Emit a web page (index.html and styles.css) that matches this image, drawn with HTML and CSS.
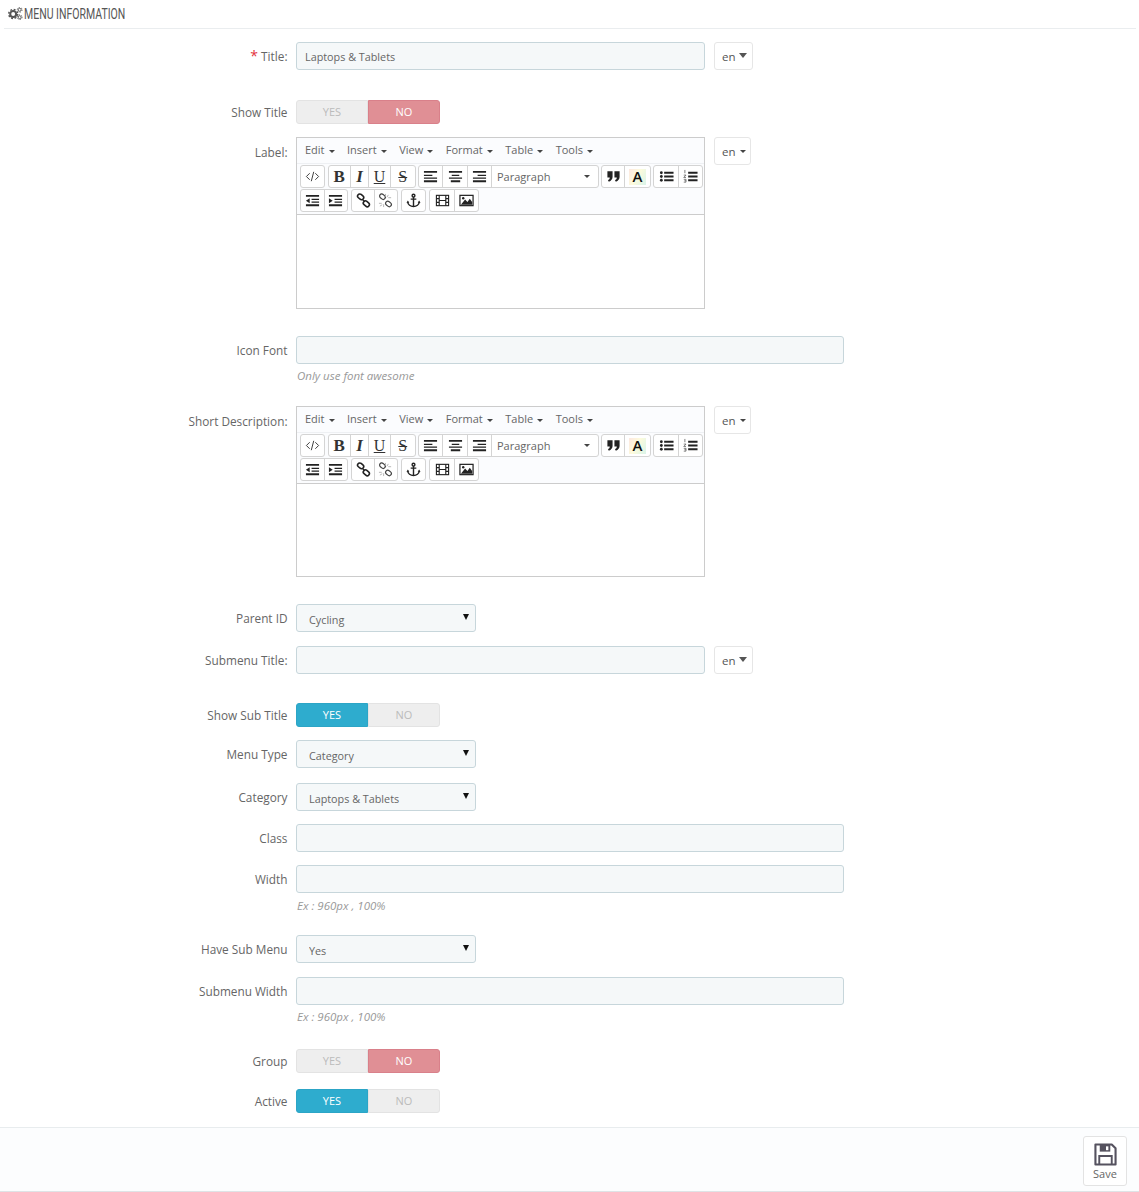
FILE: index.html
```html
<!DOCTYPE html>
<html lang="en">
<head>
<meta charset="utf-8">
<title>Menu Information</title>
<link rel="stylesheet" href="styles.css">
</head>
<body>
<svg class="sprite" xmlns="http://www.w3.org/2000/svg">
<symbol id="i-code" viewBox="0 0 16 16"><path d="M5 4.500 1.500 8 5 11.500M11 4.500 14.500 8 11 11.500M9.300 3 6.700 13" fill="none" stroke="#333" stroke-width="1"/></symbol>
<symbol id="i-left" viewBox="0 0 16 16"><path d="M1 2h14v2H1zM1 6h9v1.500H1zM1 9h14v1.500H1zM1 12h14v2H1z" fill="#222"/></symbol>
<symbol id="i-center" viewBox="0 0 16 16"><path d="M1 2h14v2H1zM4 6h8v1.500H4zM1 9h14v1.500H1zM3 12h10v2H3z" fill="#222"/></symbol>
<symbol id="i-right" viewBox="0 0 16 16"><path d="M1 2h14v2H1zM6 6h9v1.500H6zM1 9h14v1.500H1zM1 12h14v2H1z" fill="#222"/></symbol>
<symbol id="i-quote" viewBox="0 0 16 16"><path d="M1.500 2.500h5.500v6c0 2.500-1.500 4-4 5L2 11.800c1.300-.6 2-1.300 2-2.800H1.500zM9 2.500h5.500v6c0 2.500-1.500 4-4 5l-1-1.700c1.300-.6 2-1.300 2-2.800H9z" fill="#222"/></symbol>
<symbol id="i-ul" viewBox="0 0 16 16"><path d="M5.500 3h10v2h-10zM5.500 7h10v2h-10zM5.500 11h10v2h-10z" fill="#222"/><circle cx="2.500" cy="4" r="1.500" fill="#222"/><circle cx="2.500" cy="8" r="1.500" fill="#222"/><circle cx="2.500" cy="12" r="1.500" fill="#222"/></symbol>
<symbol id="i-ol" viewBox="0 0 16 16"><path d="M5.500 3h10v2h-10zM5.500 7h10v2h-10zM5.500 11h10v2h-10z" fill="#222"/><path d="M2 1v3.500M.8 6.500h2.400L.8 9h2.400M.8 11h2.400v3H.8M1.500 12.500h1.700" fill="none" stroke="#555" stroke-width=".8"/></symbol>
<symbol id="i-outdent" viewBox="0 0 16 16"><path d="M1 2h14v2H1zM7 6h8v1.500H7zM7 9h8v1.500H7zM1 12h14v2H1z" fill="#222"/><path d="M5 5.500v5.500L1 8.200z" fill="#222"/></symbol>
<symbol id="i-indent" viewBox="0 0 16 16"><path d="M1 2h14v2H1zM7 6h8v1.500H7zM7 9h8v1.500H7zM1 12h14v2H1z" fill="#222"/><path d="M1 5.500v5.500l4-2.800z" fill="#222"/></symbol>
<symbol id="i-link" viewBox="0 0 16 16"><g fill="none" stroke="#222" stroke-width="1.700"><rect x="1.500" y="1.800" width="7" height="4.600" rx="2.300" transform="rotate(40 5 4)"/><rect x="7.500" y="9.200" width="7" height="4.600" rx="2.300" transform="rotate(40 11 11.500)"/><path d="M6.500 6.500l3 3" stroke-width="1.400"/></g></symbol>
<symbol id="i-unlink" viewBox="0 0 16 16"><g fill="none" stroke="#444" stroke-width="1.300"><rect x="1.500" y="1.800" width="6.500" height="4.600" rx="2.300" transform="rotate(40 5 4)"/><rect x="8" y="9.200" width="6.500" height="4.600" rx="2.300" transform="rotate(40 11 11.500)"/></g><path d="M8 1v3M11 2 9.500 4.500M14 5h-3M1 11h3M2 14l2.500-1.500M6 15v-3" fill="none" stroke="#aaa" stroke-width=".9"/></symbol>
<symbol id="i-anchor" viewBox="0 0 16 16"><g fill="none" stroke="#222" stroke-width="1.500"><circle cx="8" cy="2.800" r="1.500"/><path d="M8 4.300V14.500M5 6.500h6M1.800 9.500c.3 3 3 5 6.200 5s5.900-2 6.200-5"/></g><path d="M.5 10.500 2 8l1.500 2.500zM12.500 10.500 14 8l1.500 2.500z" fill="#222"/></symbol>
<symbol id="i-film" viewBox="0 0 16 16"><g fill="none" stroke="#222" stroke-width="1.200"><rect x="1.500" y="2.500" width="13" height="11"/><path d="M4.500 2.500v11M11.500 2.500v11M1.500 6h3M1.500 10h3M11.500 6h3M11.500 10h3M4.500 8h7"/></g></symbol>
<symbol id="i-image" viewBox="0 0 16 16"><rect x="1" y="2.500" width="14" height="11" fill="#fff" stroke="#222" stroke-width="1.300"/><path d="M2 12.500 6.500 7l2.500 2.500L11.500 6l2.500 3.500v3z" fill="#222"/><circle cx="4.500" cy="5.500" r="1.300" fill="#222"/></symbol>
<symbol id="i-cogs" viewBox="0 0 16 14"><g fill="none" stroke="#555"><circle cx="5.500" cy="7.500" r="3.200" stroke-width="2.200"/><circle cx="5.500" cy="7.500" r="4.800" stroke-width="1.600" stroke-dasharray="2 1.770"/><circle cx="12.500" cy="3" r="1.600" stroke-width="1"/><circle cx="12.500" cy="3" r="2.600" stroke-width="1" stroke-dasharray="1.300 1.420"/><circle cx="12.500" cy="11" r="1.600" stroke-width="1"/><circle cx="12.500" cy="11" r="2.600" stroke-width="1" stroke-dasharray="1.300 1.420"/></g></symbol>
<symbol id="i-save" viewBox="0 0 24 24"><path d="M1.500 1.500h17l4 4v17h-21z" fill="none" stroke="#55525f" stroke-width="2.200" stroke-linejoin="round"/><path d="M6 2h11v7H6z" fill="#55525f"/><path d="M12.500 3.500h2.500v4h-2.500z" fill="#fff"/><path d="M5.500 22v-8.500h13V22" fill="none" stroke="#55525f" stroke-width="2"/></symbol>
</svg>

<header class="panel-head"><svg class="head-icon"><use href="#i-cogs"/></svg><span class="head-text">MENU INFORMATION</span></header>

<form class="form">
  <div class="row first">
    <label class="lbl"><span class="req">*</span> Title:</label>
    <input class="field field-md" type="text" value="Laptops &amp; Tablets">
    <button class="lang" type="button">en <i class="caret-lg"></i></button>
  </div>

  <div class="row gap-30">
    <label class="lbl">Show Title</label>
    <div class="switch"><span class="off">YES</span><span class="on-no">NO</span></div>
  </div>

  <div class="row top gap-13">
    <label class="lbl lbl-top">Label:</label>
    <div class="editor">
      <div class="menubar"><span>Edit<i class="caret"></i></span><span>Insert<i class="caret"></i></span><span>View<i class="caret"></i></span><span>Format<i class="caret"></i></span><span>Table<i class="caret"></i></span><span>Tools<i class="caret"></i></span></div>
      <div class="tools">
        <div class="tool-row">
          <div class="grp"><span class="b w235"><svg class="ic"><use href="#i-code"/></svg></span></div>
          <div class="grp"><span class="b w215 tx-b">B</span><span class="b w18 tx-i">I</span><span class="b w22 tx-u"><u>U</u></span><span class="b w245 tx-s"><s>S</s></span></div>
          <div class="grp"><span class="b w23"><svg class="ic"><use href="#i-left"/></svg></span><span class="b w25"><svg class="ic"><use href="#i-center"/></svg></span><span class="b w24"><svg class="ic"><use href="#i-right"/></svg></span><span class="b para">Paragraph<i class="caret"></i></span></div>
          <div class="grp"><span class="b w22"><svg class="ic"><use href="#i-quote"/></svg></span><span class="b w257"><span class="tx-a">A</span></span></div>
          <div class="grp"><span class="b w24"><svg class="ic"><use href="#i-ul"/></svg></span><span class="b w237"><svg class="ic"><use href="#i-ol"/></svg></span></div>
        </div>
        <div class="tool-row tool-row-wide">
          <div class="grp"><span class="b w23"><svg class="ic"><use href="#i-outdent"/></svg></span><span class="b w235"><svg class="ic"><use href="#i-indent"/></svg></span></div>
          <div class="grp"><span class="b w22"><svg class="ic"><use href="#i-link"/></svg></span><span class="b w225"><svg class="ic"><use href="#i-unlink"/></svg></span></div>
          <div class="grp"><span class="b w23"><svg class="ic"><use href="#i-anchor"/></svg></span></div>
          <div class="grp"><span class="b w24"><svg class="ic"><use href="#i-film"/></svg></span><span class="b w237"><svg class="ic"><use href="#i-image"/></svg></span></div>
        </div>
      </div>
      <div class="edit-area"></div>
    </div>
    <button class="lang lang-sm" type="button">en<i class="caret"></i></button>
  </div>

  <div class="row gap-27">
    <label class="lbl">Icon Font</label>
    <input class="field field-lg" type="text">
  </div>
  <p class="help">Only use font awesome</p>

  <div class="row top gap-help">
    <label class="lbl lbl-top">Short Description:</label>
    <div class="editor">
      <div class="menubar"><span>Edit<i class="caret"></i></span><span>Insert<i class="caret"></i></span><span>View<i class="caret"></i></span><span>Format<i class="caret"></i></span><span>Table<i class="caret"></i></span><span>Tools<i class="caret"></i></span></div>
      <div class="tools">
        <div class="tool-row">
          <div class="grp"><span class="b w235"><svg class="ic"><use href="#i-code"/></svg></span></div>
          <div class="grp"><span class="b w215 tx-b">B</span><span class="b w18 tx-i">I</span><span class="b w22 tx-u"><u>U</u></span><span class="b w245 tx-s"><s>S</s></span></div>
          <div class="grp"><span class="b w23"><svg class="ic"><use href="#i-left"/></svg></span><span class="b w25"><svg class="ic"><use href="#i-center"/></svg></span><span class="b w24"><svg class="ic"><use href="#i-right"/></svg></span><span class="b para">Paragraph<i class="caret"></i></span></div>
          <div class="grp"><span class="b w22"><svg class="ic"><use href="#i-quote"/></svg></span><span class="b w257"><span class="tx-a">A</span></span></div>
          <div class="grp"><span class="b w24"><svg class="ic"><use href="#i-ul"/></svg></span><span class="b w237"><svg class="ic"><use href="#i-ol"/></svg></span></div>
        </div>
        <div class="tool-row tool-row-wide">
          <div class="grp"><span class="b w23"><svg class="ic"><use href="#i-outdent"/></svg></span><span class="b w235"><svg class="ic"><use href="#i-indent"/></svg></span></div>
          <div class="grp"><span class="b w22"><svg class="ic"><use href="#i-link"/></svg></span><span class="b w225"><svg class="ic"><use href="#i-unlink"/></svg></span></div>
          <div class="grp"><span class="b w23"><svg class="ic"><use href="#i-anchor"/></svg></span></div>
          <div class="grp"><span class="b w24"><svg class="ic"><use href="#i-film"/></svg></span><span class="b w237"><svg class="ic"><use href="#i-image"/></svg></span></div>
        </div>
      </div>
      <div class="edit-area edit-area-short"></div>
    </div>
    <button class="lang lang-sm" type="button">en<i class="caret"></i></button>
  </div>

  <div class="row gap-27">
    <label class="lbl">Parent ID</label>
    <div class="sel"><select><option>Cycling</option></select></div>
  </div>

  <div class="row gap-14">
    <label class="lbl">Submenu Title:</label>
    <input class="field field-md" type="text">
    <button class="lang" type="button">en <i class="caret-lg"></i></button>
  </div>

  <div class="row gap-29">
    <label class="lbl">Show Sub Title</label>
    <div class="switch"><span class="on-yes">YES</span><span class="off">NO</span></div>
  </div>

  <div class="row gap-13">
    <label class="lbl">Menu Type</label>
    <div class="sel"><select><option>Category</option></select></div>
  </div>

  <div class="row gap-15">
    <label class="lbl">Category</label>
    <div class="sel"><select><option>Laptops &amp; Tablets</option></select></div>
  </div>

  <div class="row gap-13">
    <label class="lbl">Class</label>
    <input class="field field-lg" type="text">
  </div>

  <div class="row gap-13">
    <label class="lbl">Width</label>
    <input class="field field-lg" type="text">
  </div>
  <p class="help help-low">Ex : 960px , 100%</p>

  <div class="row gap-help-low">
    <label class="lbl">Have Sub Menu</label>
    <div class="sel"><select><option>Yes</option></select></div>
  </div>

  <div class="row gap-14">
    <label class="lbl">Submenu Width</label>
    <input class="field field-lg" type="text">
  </div>
  <p class="help">Ex : 960px , 100%</p>

  <div class="row gap-help-lg">
    <label class="lbl">Group</label>
    <div class="switch"><span class="off">YES</span><span class="on-no">NO</span></div>
  </div>

  <div class="row gap-16">
    <label class="lbl">Active</label>
    <div class="switch"><span class="on-yes">YES</span><span class="off">NO</span></div>
  </div>
</form>

<footer class="panel-foot">
  <button class="save" type="button"><svg class="save-icon"><use href="#i-save"/></svg><span>Save</span></button>
</footer>
</body>
</html>
```

FILE: styles.css
```css
* { box-sizing: border-box; }
html, body { margin: 0; padding: 0; background: #fff; }
body { font-family: "Open Sans", sans-serif; font-size: 12px; color: #666; height: 1192px; overflow: hidden; }
.sprite { display: none; }

.panel-head { height: 29px; margin: 0 3px 0 4px; padding: 6px 0 0 4px; border-bottom: 1px solid #eaedef; display: flex; align-items: flex-start; color: #555; }
.head-icon { width: 15px; height: 13px; margin: 1px 1px 0 0; flex: none; }
.head-text { font-family: "Roboto", sans-serif; font-size: 14.500px; line-height: 17px; transform: scaleX(.725); transform-origin: left center; white-space: nowrap; }

.form { display: block; }
.row { display: flex; align-items: center; margin: 0; }
.row.top { align-items: flex-start; }
.first { margin-top: 13px; }
.gap-13 { margin-top: 13px; }
.gap-14 { margin-top: 14px; }
.gap-15 { margin-top: 15px; }
.gap-16 { margin-top: 16px; }
.gap-27 { margin-top: 27px; }
.gap-29 { margin-top: 29px; }
.gap-30 { margin-top: 30px; }
.gap-help { margin-top: 22px; }
.gap-help-low { margin-top: 21px; }
.gap-help-lg { margin-top: 24px; }

.lbl { width: 287.500px; margin-right: 8.500px; margin-top: 0; padding-bottom: 1px; text-align: right; font-size: 11.800px; line-height: 18px; color: #666; flex: none; }
.lbl-top { margin-top: 6px; }
.req { color: #e3323c; font-size: 14px; }

.field { height: 28px; border: 1px solid #c7d6db; border-radius: 3px; background: #f5f8f9; padding: 0 8px; font: 10.800px "Open Sans", sans-serif; color: #666; }
.field-md { width: 409px; }
.field-lg { width: 548px; }

.lang { margin-left: 9px; height: 28px; width: 39px; padding: 0 0 0 7px; border: 1px solid #e6e6e6; border-radius: 3px; background: #fff; font: 11.500px "Open Sans", sans-serif; color: #555; display: flex; align-items: center; }
.lang-sm { width: 37px; margin-top: 0; }
.caret-lg { width: 0; height: 0; margin: 0 0 1px 3px; border-left: 4.500px solid transparent; border-right: 4.500px solid transparent; border-top: 5px solid #555; }
.caret { display: inline-block; width: 0; height: 0; margin-left: 4px; border-left: 3px solid transparent; border-right: 3px solid transparent; border-top: 3.500px solid #444; vertical-align: middle; }

.switch { display: flex; width: 144px; height: 24px; font-size: 11px; line-height: 22px; text-align: center; }
.switch span { width: 72px; border: 1px solid #e3e3e3; }
.switch span:first-child { border-radius: 3px 0 0 3px; }
.switch span:last-child { border-radius: 0 3px 3px 0; }
.off { background: #eee; color: #bbb; }
.on-no { background: #e08f95; border-color: #d9808a !important; color: #fff; font-weight: 500; }
.on-yes { background: #2eacce; border-color: #2ca5c6 !important; color: #fff; font-weight: 500; }

.editor { width: 409px; border: 1px solid #ccc; flex: none; background: #fff; }
.menubar { height: 26px; background: #fbfcfe; border-bottom: 1px solid #eef0f3; display: flex; padding: 4px 0 0 8px; gap: 12.500px; font-size: 11px; line-height: 16px; color: #666; }
.tools { background: #fbfcfe; border-bottom: 1px solid #ccc; padding: 1px 2px 1px 2.500px; height: 51px; }
.tool-row { display: flex; gap: 2.500px; height: 23px; margin-bottom: 1px; }
.tool-row-wide { gap: 3.200px; }
.grp { display: flex; border: 1px solid #d4d4d4; border-radius: 3px; background: #fff; height: 23px; }
.b { display: flex; align-items: center; justify-content: center; height: 21px; border-left: 1px solid #d4d4d4; color: #222; }
.b:first-child { border-left: 0; }
.w18 { width: 18px; } .w215 { width: 21.500px; } .w22 { width: 22px; } .w225 { width: 22.500px; } .w23 { width: 23px; } .w235 { width: 23.500px; } .w237 { width: 23.700px; } .w24 { width: 24px; } .w245 { width: 24.500px; } .w25 { width: 25px; } .w257 { width: 25.700px; }
.ic { width: 15px; height: 15px; flex: none; }
.tx-b, .tx-i, .tx-u, .tx-s { font-family: "Liberation Serif", serif; font-size: 17px; line-height: 18px; color: #333; }
.tx-b { font-weight: 700; }
.tx-i { font-style: italic; font-weight: 700; }
.tx-u, .tx-s { font-size: 16px; }
.para { width: 106.600px; justify-content: space-between; padding: 0 8px 0 5px; font-size: 11px; color: #666; }
.tx-a { display: block; width: 17px; height: 16px; text-align: center; font: 600 15px/15px "Open Sans", sans-serif; color: #111; background: linear-gradient(120deg, #fde7e0, #fdfbdc 45%, #d9f4ea); }
.edit-area { height: 93px; background: #fff; }
.edit-area-short { height: 92px; }

.sel { position: relative; width: 180px; height: 28px; }
.sel::after { content: ""; position: absolute; right: 7px; top: 10px; border-left: 3.500px solid transparent; border-right: 3.500px solid transparent; border-top: 6px solid #111; }
.sel select { width: 100%; height: 100%; appearance: none; border: 1px solid #c7d6db; border-radius: 3px; background: #f5f8f9; padding: 3px 8px 0 12px; font: 10.800px "Open Sans", sans-serif; color: #666; }

.help { margin: 4px 0 0 297px; height: 16px; font-size: 11.500px; line-height: 16px; font-style: italic; color: #999; }
.help-low { margin-top: 5px; }

.panel-foot { margin-top: 14px; height: 65px; background: #fcfdfe; border-top: 1px solid #e8ecee; border-bottom: 1px solid #dfe3e6; padding: 8px 12px 0 0; display: flex; justify-content: flex-end; align-items: flex-start; }
.save { width: 44px; height: 50px; padding: 6px 0 0; border: 1px solid #e3e3e3; border-radius: 3px; background: #fff; font: 11px/12px "Open Sans", sans-serif; color: #666; display: flex; flex-direction: column; align-items: center; gap: 2px; }
.save-icon { width: 23px; height: 23px; flex: none; }
```
